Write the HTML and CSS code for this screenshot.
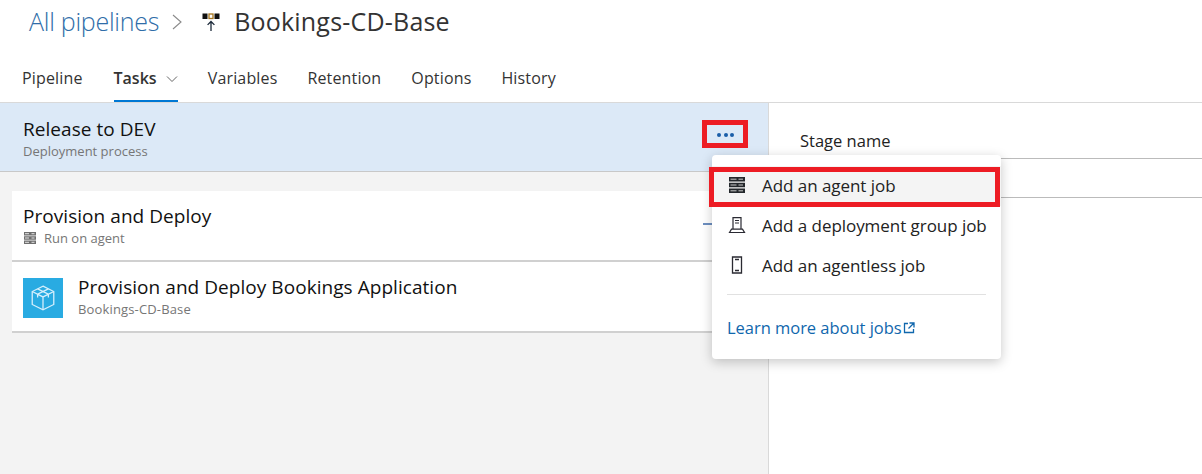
FILE: index.html
```html
<!DOCTYPE html>
<html lang="en">
<head>
    <meta charset="UTF-8">
    <meta name="viewport" content="width=device-width, initial-scale=1.0">
    <title>Bookings-CD-Base - Tasks</title>
    <link rel="stylesheet" href="styles.css">
</head>
<body>
    <div class="breadcrumb">
        <span class="crumb-link">All pipelines</span>
        <svg class="crumb-sep" width="12" height="18" viewBox="0 0 12 18"><path d="M2 2l8 7-8 7" fill="none" stroke="#8a8a8a" stroke-width="1.1"/></svg>
        <svg class="crumb-icon" width="18" height="18" viewBox="0 0 18 18">
            <rect x="0.500" y="0.500" width="5" height="5.500" fill="#111"/>
            <rect x="7" y="1" width="4" height="4.500" fill="#fff" stroke="#a5741c" stroke-width="1.3"/>
            <rect x="12.500" y="0.500" width="5" height="5.500" fill="#111"/>
            <path d="M9 18V8.500M5.600 11.900L9 8.500l3.400 3.400" fill="none" stroke="#1c2a3a" stroke-width="1.3"/>
        </svg>
        <span class="crumb-title">Bookings-CD-Base</span>
    </div>

    <div class="tabs">
        <span class="tab">Pipeline</span>
        <span class="tab active">Tasks
            <svg width="12" height="8" viewBox="0 0 12 8"><path d="M1 1.500l5 5 5-5" fill="none" stroke="#666" stroke-width="1"/></svg>
        </span>
        <span class="tab">Variables</span>
        <span class="tab">Retention</span>
        <span class="tab">Options</span>
        <span class="tab">History</span>
    </div>

    <div class="main">
        <div class="left-panel">
            <div class="stage-header">
                <div class="title">Release to DEV</div>
                <div class="subtitle">Deployment process</div>
            </div>
            <div class="job-list">
                <div class="job-row job-head">
                    <div class="title">Provision and Deploy</div>
                    <div class="subtitle run-on">
                        <svg width="14" height="14" viewBox="0 0 14 14">
                            <path d="M1 1h12v3.400H1zM1 5.300h12v3.400H1zM1 9.600h12V13H1z" fill="#6f6f6f"/>
                            <path d="M2 2.700h4M8.500 2.700h3M2 7h4M8.500 7h3M2 11.300h4M8.500 11.300h3" stroke="#e4e4e4" stroke-width="1"/>
                        </svg>
                        Run on agent
                    </div>
                    <span class="add-btn"></span>
                </div>
                <div class="job-row task-row">
                    <div class="task-icon">
                        <svg width="26" height="28" viewBox="0 0 24 26" fill="none" stroke="#d6effc" stroke-width="1.2">
                            <path d="M12 2l10 5v12l-10 5-10-5V7z"/>
                            <path d="M2 7l10 5 10-5M12 12v12M7 4.500l10 5v3M17 4.500l-10 5v3"/>
                        </svg>
                    </div>
                    <div>
                        <div class="title">Provision and Deploy Bookings Application</div>
                        <div class="subtitle">Bookings-CD-Base</div>
                    </div>
                </div>
            </div>
        </div>
        <div class="right-panel">
            <div class="field-label">Stage name</div>
            <div class="field-input"></div>
        </div>
    </div>

    <!-- context menu and the red callouts sit over the page -->
    <div class="callout callout-dots"></div>
    <div class="dots"><i></i><i></i><i></i></div>

    <div class="menu">
        <div class="menu-item selected">
            <svg width="18" height="18" viewBox="0 0 18 18">
                <path d="M1 1h16v4.400H1zM1 6.800h16v4.400H1zM1 12.600h16V17H1z" fill="#24282c"/>
                <path d="M2.500 3.200h6M10.500 3.200h4.500M2.500 9h6M10.500 9h4.500M2.500 14.800h6M10.500 14.800h4.500" stroke="#c8c8c8" stroke-width="1"/>
            </svg>
            Add an agent job
        </div>
        <div class="menu-item">
            <svg width="18" height="18" viewBox="0 0 18 18" fill="none" stroke="#2a2a32" stroke-width="1.2">
                <path d="M5 13V1.600h8V13M1.500 16.500L3.500 13.200h11l2 3.300z"/>
                <path d="M7 4.500h4M7 7h4"/>
            </svg>
            Add a deployment group job
        </div>
        <div class="menu-item">
            <svg width="18" height="18" viewBox="0 0 18 18" fill="none" stroke="#2a2a32" stroke-width="1.3">
                <path d="M4.500 1h9v16h-9z"/>
                <path d="M7 3.500h4M7 14.500h4"/>
            </svg>
            Add an agentless job
        </div>
        <div class="menu-divider"></div>
        <div class="menu-link">Learn more about jobs
            <svg width="12" height="12" viewBox="0 0 12 12" fill="none" stroke="#1067ad" stroke-width="1.3">
                <path d="M5 1.500H1.500v9h9V7M6.500 1h4.500v4.500M11 1L5.500 6.500"/>
            </svg>
        </div>
    </div>
    <div class="callout callout-item"></div>
</body>
</html>
```

FILE: styles.css
```css
html, body {
    margin: 0;
    height: 474px;
    overflow: hidden;
}

body {
    position: relative;
    font-family: "Open Sans", "Noto Sans", sans-serif;
    background: white;
    color: #1f1f1f;
}

.breadcrumb {
    height: 42px;
    display: flex;
    align-items: center;
    padding-left: 29px;
    padding-bottom: 2px;
    font-size: 25px;
}

.crumb-link {
    color: #2f6da8;
    font-weight: 300;
    letter-spacing: -0.25px;
}

.crumb-sep {
    margin: 1px 0 0 12px;
}

.crumb-icon {
    margin: 2px 14px 0 19px;
}

.crumb-title {
    color: #333;
    letter-spacing: 0.2px;
}

.tabs {
    height: 58px;
    display: flex;
    gap: 30px;
    padding-left: 22px;
    border-bottom: 1px solid #d9d9d9;
}

.tab {
    font-size: 16px;
    letter-spacing: 0.15px;
    line-height: 20px;
    padding-top: 24px;
    color: #333;
    box-sizing: border-box;
    height: 58px;
}

.tab.active {
    font-weight: 600;
    letter-spacing: 0;
    margin-left: 1px;
    border-bottom: 2px solid #0078d4;
}

.tab.active svg {
    margin-left: 5px;
    vertical-align: 1px;
}

.main {
    display: flex;
    height: 371px;
}

.left-panel {
    width: 768px;
    background: #f3f3f3;
    border-right: 1px solid #d9d9d9;
    flex-shrink: 0;
}

.stage-header {
    height: 69px;
    padding: 14px 23px 0;
    box-sizing: border-box;
    background: #dce9f7;
    border-bottom: 1px solid #c8c8c8;
}

.title {
    font-size: 19px;
    line-height: 24px;
    letter-spacing: 0.05px;
    color: #111;
}

.subtitle {
    font-size: 13px;
    line-height: 18px;
    color: #767676;
}

.stage-header .subtitle {
    margin-top: 1px;
}

.job-list {
    margin: 19px 0 0 12px;
}

.job-row {
    position: relative;
    background: white;
    border-bottom: 2px solid #d0d0d0;
    box-sizing: border-box;
}

.job-head {
    height: 71px;
    padding: 13px 11px 0;
}

.run-on {
    display: flex;
    align-items: center;
    gap: 7px;
    margin-top: 1px;
}

.add-btn {
    position: absolute;
    left: 691px;
    top: 32px;
    width: 14px;
    height: 2px;
    background: #6d8fc0;
}

.task-row {
    height: 71px;
    display: flex;
    align-items: flex-start;
    gap: 15px;
    padding: 16px 11px 0;
}

.task-row .title {
    margin-top: -3px;
}

.task-row .subtitle {
    margin-top: 1px;
    letter-spacing: 0.15px;
}

.task-icon {
    width: 40px;
    height: 40px;
    background: #29abe2;
    display: flex;
    align-items: center;
    justify-content: center;
}

.right-panel {
    flex: 1;
    padding: 27px 0 0 31px;
}

.field-label {
    font-size: 16.5px;
    line-height: 22px;
    color: #222;
}

.field-input {
    height: 40px;
    margin-top: 6px;
    border-top: 1px solid #bbb;
    border-bottom: 1px solid #bbb;
    box-sizing: border-box;
}

.callout {
    position: absolute;
    border: 5px solid #ed1c24;
    box-sizing: border-box;
}

.callout-dots {
    left: 702px;
    top: 120px;
    width: 46px;
    height: 28px;
}

.callout-item {
    left: 709px;
    top: 167px;
    width: 291px;
    height: 40px;
}

.dots {
    position: absolute;
    left: 717px;
    top: 133px;
    display: flex;
    gap: 2.5px;
}

.dots i {
    width: 4px;
    height: 4px;
    border-radius: 50%;
    background: #1a5ea8;
}

.menu {
    position: absolute;
    left: 712px;
    top: 155px;
    width: 289px;
    height: 204px;
    padding-top: 11px;
    box-sizing: border-box;
    background: white;
    border-radius: 4px;
    box-shadow: 0 3px 12px rgba(0,0,0,0.22);
}

.menu-item {
    height: 40px;
    display: flex;
    align-items: center;
    gap: 16px;
    padding: 0 0 2px 16px;
    box-sizing: border-box;
    font-size: 17px;
    letter-spacing: -0.05px;
    color: #222;
}

.menu-item.selected {
    background: #f4f4f4;
}

.menu-divider {
    height: 1px;
    margin: 8px 15px 0;
    background: #e1e1e1;
}

.menu-link {
    margin: 22px 0 0 15px;
    font-size: 16.5px;
    line-height: 22px;
    letter-spacing: -0.03px;
    color: #1067ad;
}

.menu-link svg {
    margin-left: -3px;
}
```
